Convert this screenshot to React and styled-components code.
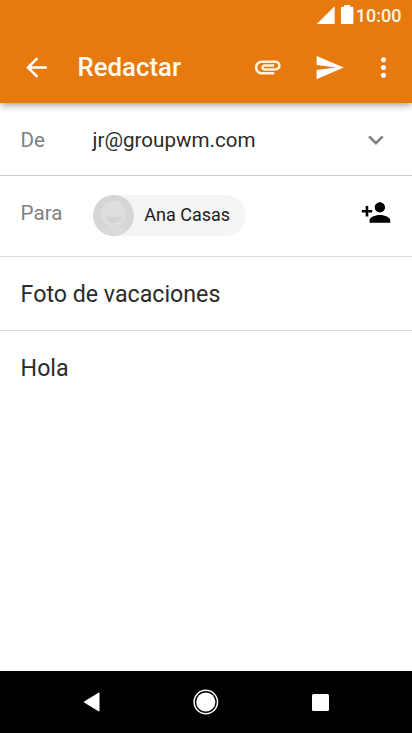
import React from "react";
import styled, { createGlobalStyle } from "styled-components";

const GlobalStyle = createGlobalStyle`
  body {
    margin: 0;
    background: #fff;
    font-family: Roboto, "Liberation Sans", sans-serif;
  }
`;

const Screen = styled.div`
  display: flex;
  flex-direction: column;
  width: 412px;
  height: 733px;
  overflow: hidden;
  background: #fff;
`;

const Header = styled.header`
  flex: none;
  height: 103px;
  background: #e67a0f;
  color: #fff;
  box-shadow: 0 4px 7px -1px rgba(0, 0, 0, 0.3), 0 0 4px rgba(0, 0, 0, 0.12);
`;

const StatusBar = styled.div`
  display: flex;
  justify-content: flex-end;
  height: 31px;
  padding-right: 10.5px;
  box-sizing: border-box;
`;

const Clock = styled.span`
  margin-left: 1.5px;
  font-size: 18px;
  font-weight: 500;
  line-height: 32px;
  color: #fff3e0;
`;

const Toolbar = styled.div`
  display: flex;
  align-items: center;
  height: 72px;
  padding: 0 13px 0 20.6px;
`;

const Title = styled.h1`
  flex: 1;
  margin: 0 0 0 26px;
  font-size: 25.75px;
  font-weight: 500;
  line-height: 30px;
  color: #fffaf0;
`;

const Icon = styled.svg`
  display: block;
  flex: none;
  width: ${(p) => p.$w || 31}px;
  height: ${(p) => p.$h || 31}px;
  margin-left: ${(p) => p.$gap || 0}px;
  margin-bottom: ${(p) => p.$lift || 0}px;
  fill: ${(p) => p.$color || "#fff"};
`;

const Row = styled.div`
  display: flex;
  flex: none;
  align-items: center;
  box-sizing: border-box;
  height: ${(p) => p.$height}px;
  padding: ${(p) => p.$top || 0}px 20.6px ${(p) => p.$bottom || 0}px;
  border-bottom: 1px solid ${(p) => p.$line};
`;

const Label = styled.span`
  flex: none;
  width: 72px;
  font-size: 20.6px;
  line-height: 24px;
  color: #808080;
  padding-bottom: ${(p) => p.$lift || 0}px;
`;

const Address = styled.span`
  flex: 1;
  font-size: 20.6px;
  line-height: 24px;
  color: #2b2b2b;
`;

const Chip = styled.div`
  display: flex;
  align-items: center;
  box-sizing: border-box;
  width: 153px;
  height: 41px;
  border-radius: 21px;
  background: #f5f5f5;
`;

const ChipName = styled.span`
  margin-left: 10.7px;
  font-size: 18px;
  line-height: 22px;
  color: #1c1c1c;
`;

const Spacer = styled.div`
  flex: 1;
`;

const Text = styled.span`
  font-size: 23.2px;
  line-height: 28px;
  color: #2b2b2b;
`;

const Body = styled.main`
  flex: 1;
  padding: 23px 20.6px 0;
`;

const NavBar = styled.nav`
  display: flex;
  flex: none;
  align-items: center;
  justify-content: space-between;
  box-sizing: border-box;
  height: 62px;
  padding: 0 83px;
  background: #000;
`;

export default function App() {
  return (
    <>
      <GlobalStyle />
      <Screen>
        <Header>
          <StatusBar>
            <Icon $w={38} $h={31} viewBox="-0.7 0 38 31">
              <path d="M0 24L18 6.3V24z" />
              <path d="M27.5 5h6v1.7h2.2q1 0 1 1V23q0 1-1 1H25.3q-1 0-1-1V7.7q0-1 1-1h2.2z" />
            </Icon>
            <Clock>10:00</Clock>
          </StatusBar>
          <Toolbar>
            <Icon viewBox="0 0 24 24">
              <path d="M20 11H7.83l5.59-5.59L12 4l-8 8 8 8 1.41-1.41L7.83 13H20v-2z" />
            </Icon>
            <Title>Redactar</Title>
            <Icon viewBox="-0.2 0.5 24 24" $color="#fff1dc">
              <path d="M2 12.5C2 9.46 4.46 7 7.5 7H18c2.21 0 4 1.79 4 4s-1.79 4-4 4H9.5C8.12 15 7 13.88 7 12.5S8.12 10 9.5 10H17v2H9.41c-.55 0-.55 1 0 1H18c1.1 0 2-.9 2-2s-.9-2-2-2H7.5C5.57 9 4 10.57 4 12.5S5.57 16 7.5 16H17v2H7.5C4.46 18 2 15.54 2 12.5z" />
            </Icon>
            <Icon viewBox="0 0 24 24" $gap={31}>
              <path d="M2.01 21L23 12 2.01 3 2 10l15 2-15 2z" />
            </Icon>
            <Icon viewBox="0 0 24 24" $gap={23}>
              <path d="M12 8c1.1 0 2-.9 2-2s-.9-2-2-2-2 .9-2 2 .9 2 2 2zm0 2c-1.1 0-2 .9-2 2s.9 2 2 2 2-.9 2-2-.9-2-2-2zm0 6c-1.1 0-2 .9-2 2s.9 2 2 2 2-.9 2-2-.9-2-2-2z" />
            </Icon>
          </Toolbar>
        </Header>
        <Row $height={73} $top={2} $line="#cfcfcf">
          <Label>De</Label>
          <Address>jr@groupwm.com</Address>
          <Icon viewBox="-0.3 0.5 24 24" $color="#808080">
            <path d="M16.59 8.59L12 13.17 7.41 8.59 6 10l6 6 6-6z" />
          </Icon>
        </Row>
        <Row $height={81} $bottom={2} $line="#dadada">
          <Label $lift={5}>Para</Label>
          <Chip>
            <Icon $w={41} $h={41} viewBox="0 0 41 41">
              <circle cx="20.5" cy="20.5" r="20.5" fill="#d6d6d6" />
              <path d="M8 36c1-4 5-5 12.5-5s11.5 1 12.5 5a20.5 20.5 0 0 1-25 0z" fill="#dadada" />
              <circle cx="20.5" cy="18.5" r="12.5" fill="#dedede" />
              <path d="M12 21.7h17.5c-1.5 4-4.5 6.3-8.7 6.3s-7.300-2.300-8.800-6.300z" fill="#d3d3d3" />
            </Icon>
            <ChipName>Ana Casas</ChipName>
          </Chip>
          <Spacer />
          <Icon viewBox="-0.4 0 24 24" $color="#000" $lift={6}>
            <path d="M15 12c2.21 0 4-1.79 4-4s-1.79-4-4-4-4 1.79-4 4 1.79 4 4 4zm-9-2V7H4v3H1v2h3v3h2v-3h3v-2H6zm9 4c-2.67 0-8 1.34-8 4v2h16v-2c0-2.66-5.33-4-8-4z" />
          </Icon>
        </Row>
        <Row $height={74} $line="#dedede">
          <Text>Foto de vacaciones</Text>
        </Row>
        <Body>
          <Text>Hola</Text>
        </Body>
        <NavBar>
          <Icon $w={18} $h={20} viewBox="0 0 18 20">
            <path d="M16.5 1.2V18.8q0 1-1 .5L1.5 10.7q-1-.7 0-1.400L15.500 .7q1-.5 1 .5z" />
          </Icon>
          <Icon $w={26} $h={26} viewBox="1.2 0 26 26" overflow="visible">
            <circle cx="13" cy="13" r="11.7" fill="none" stroke="#fff" strokeWidth="1.5" />
            <circle cx="13" cy="13" r="9.6" />
          </Icon>
          <Icon $w={17} $h={17} viewBox="0 0 17 17">
            <rect width="17" height="17" rx="1.5" />
          </Icon>
        </NavBar>
      </Screen>
    </>
  );
}
